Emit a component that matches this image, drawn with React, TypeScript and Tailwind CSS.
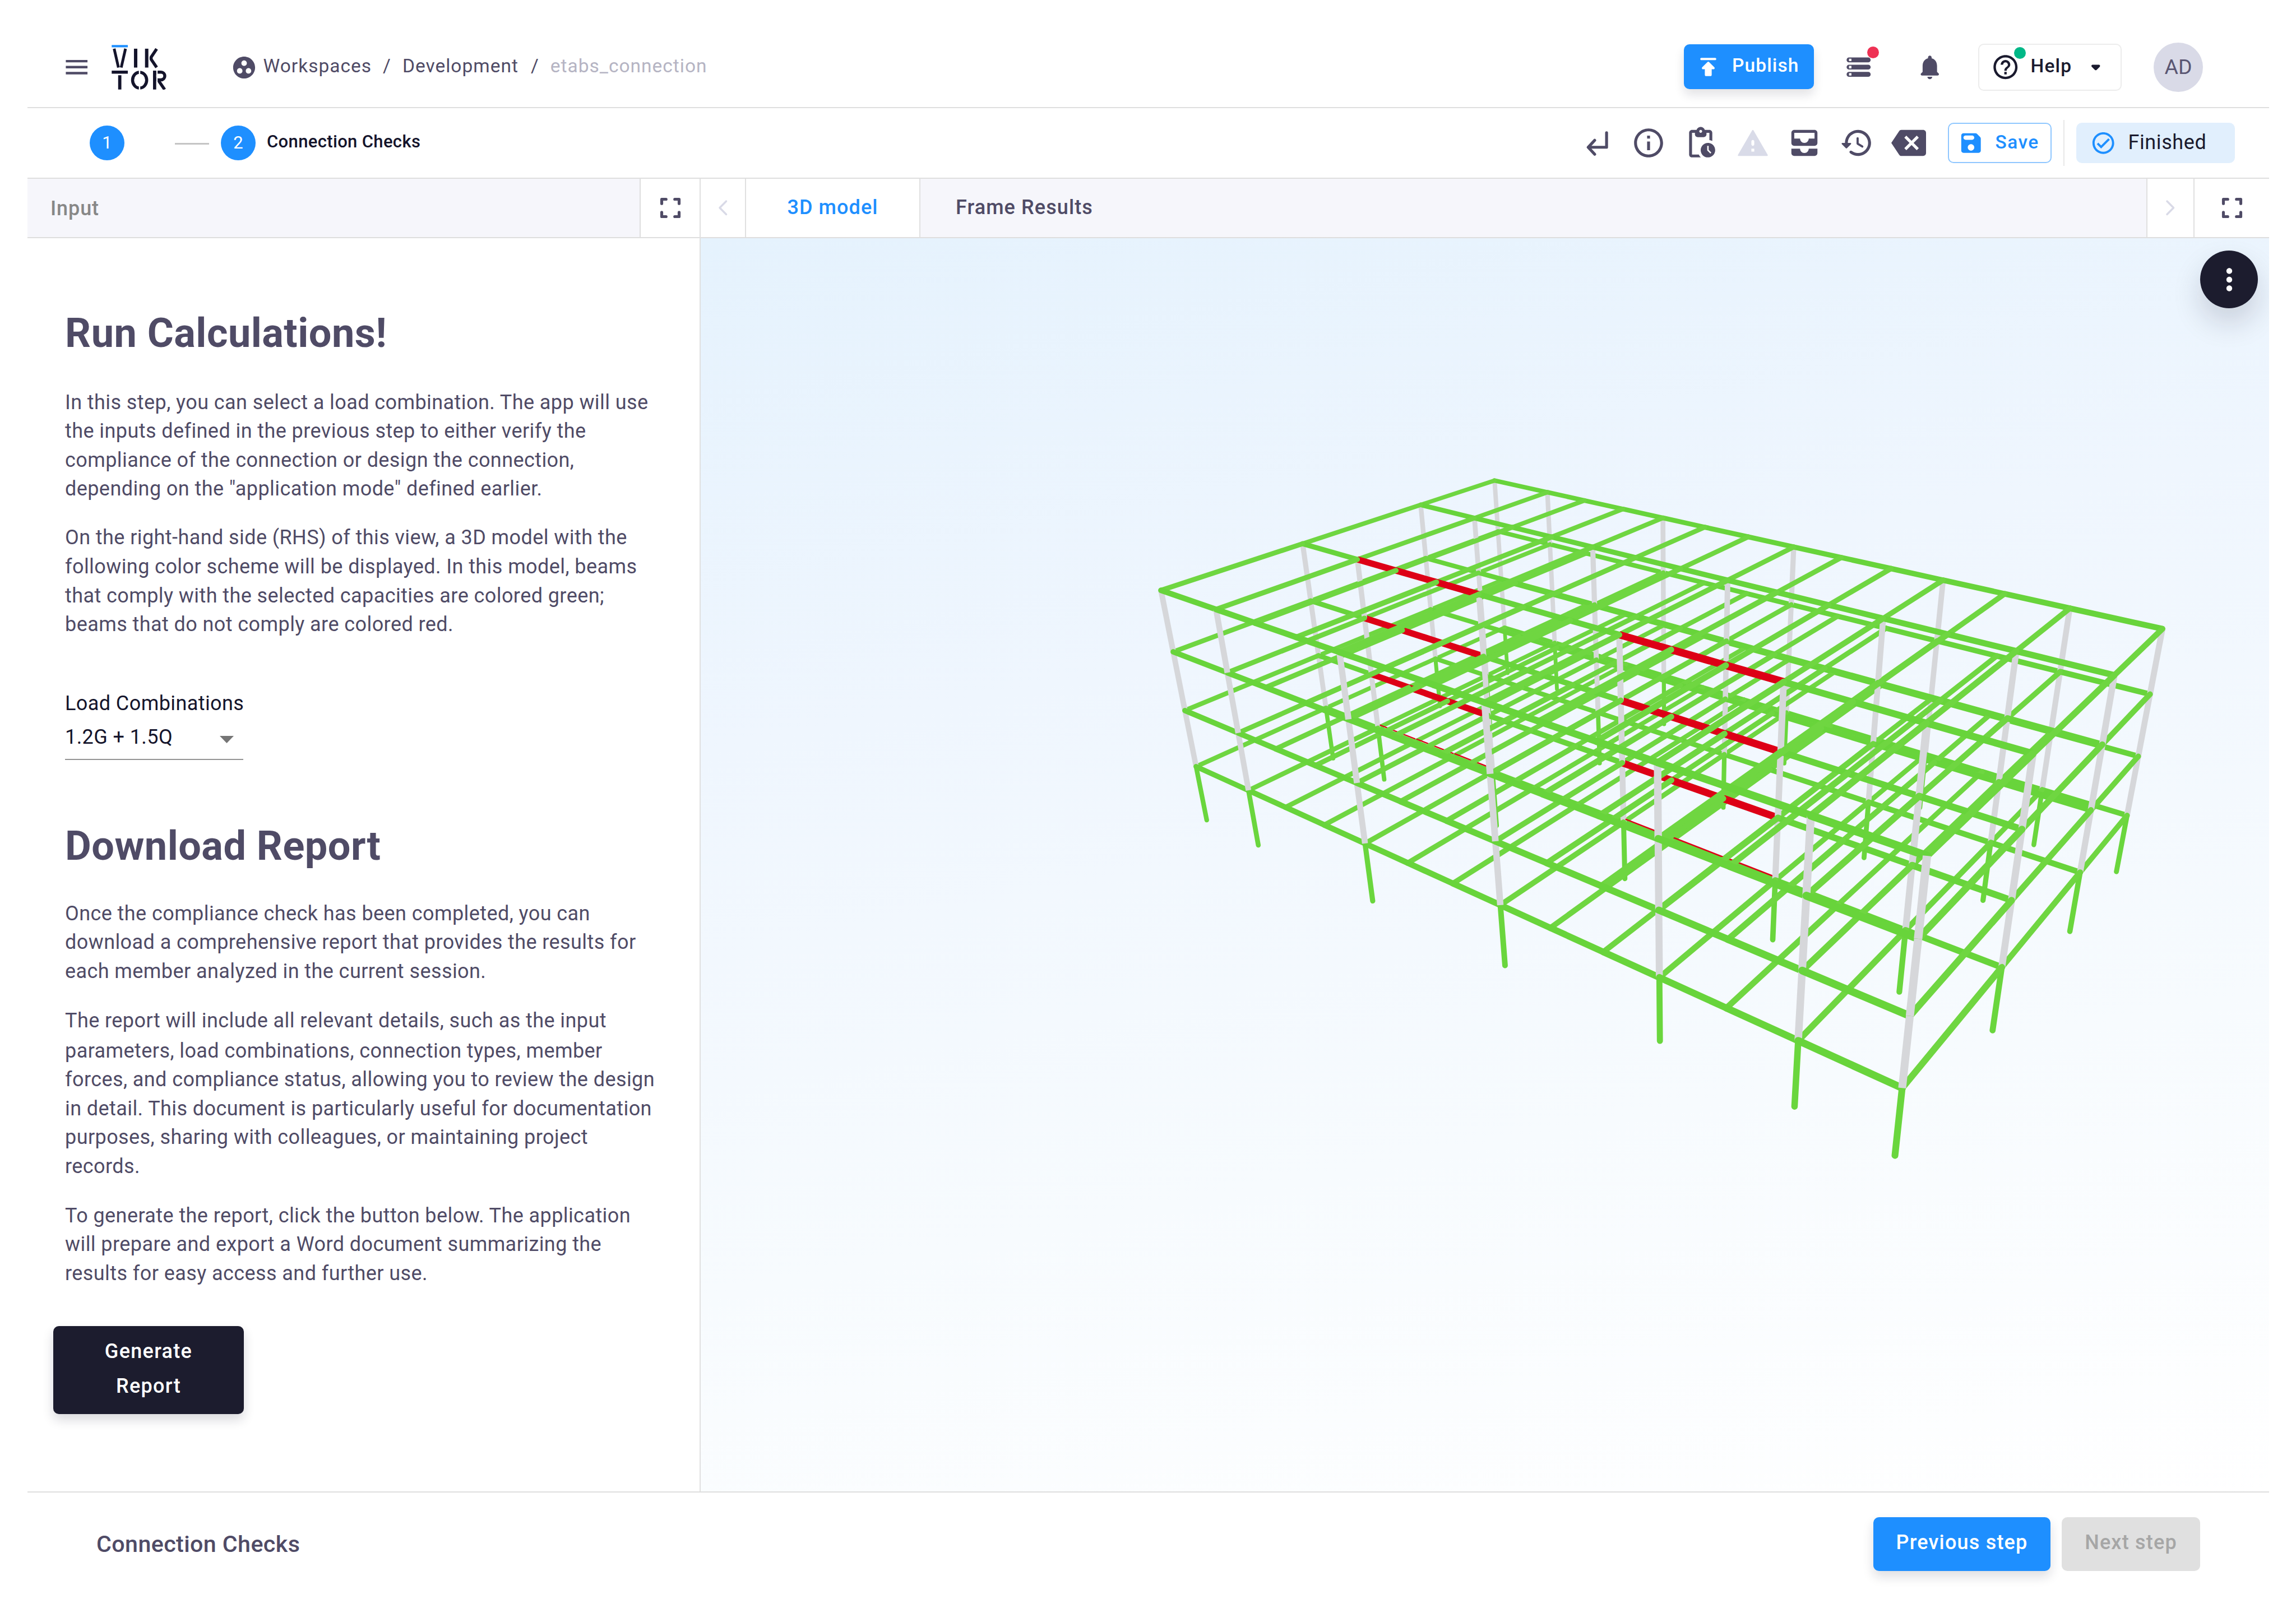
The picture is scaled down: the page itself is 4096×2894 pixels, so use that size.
import React from "react";

// Camera of the viewer: a 3x4 projection whose last entry is 1.
const CAMERA = [
  0.119762, -1.162755, -0.258307, 3.262067,
  -0.029965, -0.029707, -0.49041, 1.455934,
  -0.17574, -0.195963, -0.071145,
];

type Pt = { x: number; y: number; w: number };
const project = (gx: number, gy: number, gz: number): Pt => {
  const X = gx / 10, Y = gy, Z = gz / 4;
  const w = CAMERA[8] * X + CAMERA[9] * Y + CAMERA[10] * Z + 1;
  return {
    x: ((CAMERA[0] * X + CAMERA[1] * Y + CAMERA[2] * Z + CAMERA[3]) / w) * 1000,
    y: ((CAMERA[4] * X + CAMERA[5] * Y + CAMERA[6] * Z + CAMERA[7]) / w) * 1000,
    w,
  };
};

const COLS_X = [0, 1.5, 4.5, 7.5, 10.5, 12.75, 14.25];
const BEAMS_X = [0, 1.5, 2.5, 3.5, 4.5, 5.5, 6.5, 7.5, 8.5, 9.5, 10.5, 11.625, 12.75, 14.25];
const COLS_Y = [0, 0.265, 0.632, 1];

type Member = { a: Pt; b: Pt; depth: number; color: string; size: number; cap: "butt" | "round" };

function buildFrame(): Member[] {
  const out: Member[] = [];
  const add = (a: Pt, b: Pt, color: string, size: number, cap: "butt" | "round", bias = 0) =>
    out.push({ a, b, depth: (a.w + b.w) / 2 + bias, color, size, cap });

  for (let z = 1; z <= 4; z++) {
    COLS_Y.forEach((y, yi) => {
      for (let i = 0; i < BEAMS_X.length - 1; i++) {
        const x0 = BEAMS_X[i], x1 = BEAMS_X[i + 1];
        const failing = yi === 2 && ((x0 >= 1.5 && x1 <= 4.5) || (x0 >= 7.5 && x1 <= 10.5));
        const a = project(x0, y, z), b = project(x1, y, z);
        if (failing && z > 1) add(a, b, "#dd0016", 10.6, "butt");
        else add(a, b, "#68d43b", 8.8, "round");
        if (failing && z === 1) {
          add({ ...a, x: a.x + 4, y: a.y - 6.5 }, { ...b, x: b.x + 2, y: b.y - 6.5 }, "#dd0016", 2.2, "butt", -0.001);
        }
      }
    });
    BEAMS_X.forEach((x) => {
      for (let j = 0; j < COLS_Y.length - 1; j++) {
        add(project(x, COLS_Y[j], z), project(x, COLS_Y[j + 1], z), "#6fd641", 8.2, "round");
      }
    });
  }
  COLS_X.forEach((x) =>
    COLS_Y.forEach((y) => {
      for (let z = 0; z < 4; z++) {
        add(project(x, y, z), project(x, y, z + 1), z === 0 ? "#6ad63d" : "#d6d7da", z === 0 ? 8 : 9, z === 0 ? "round" : "butt");
      }
    }),
  );
  return out.sort((m, n) => n.depth - m.depth);
}

const FRAME = buildFrame();

function Model() {
  return (
    <svg className="block size-full" viewBox="1515.8 515.4 3394.2 2710.3" preserveAspectRatio="none">
      {FRAME.map((m, i) => (
        <line key={i} x1={m.a.x} y1={m.a.y} x2={m.b.x} y2={m.b.y} stroke={m.color} strokeWidth={m.size / ((m.a.w + m.b.w) / 2)} strokeLinecap={m.cap} />
      ))}
    </svg>
  );
}

function Icon({ d, className }: { d: string; className: string }) {
  return (
    <svg viewBox="0 0 24 24" fill="currentColor" className={`shrink-0 ${className}`}>
      <path d={d} />
    </svg>
  );
}

function StrokeIcon({ d, className, width = 2 }: { d: string; className: string; width?: number }) {
  return (
    <svg viewBox="0 0 24 24" fill="none" stroke="currentColor" strokeWidth={width} strokeLinecap="round" strokeLinejoin="round" className={`shrink-0 ${className}`}>
      <path d={d} />
    </svg>
  );
}

const ICONS = {
  menu: "M3 18h18v-2H3v2zm0-5h18v-2H3v2zm0-7v2h18V6H3z",
  workspaces:
    "M12 2C6.48 2 2 6.48 2 12s4.48 10 10 10 10-4.48 10-10S17.52 2 12 2zM8 17.5c-1.38 0-2.5-1.12-2.5-2.5s1.12-2.5 2.5-2.5 2.5 1.12 2.5 2.5-1.12 2.5-2.5 2.5zM9.5 8c0-1.38 1.12-2.5 2.5-2.5s2.5 1.12 2.5 2.5-1.12 2.5-2.5 2.5S9.5 9.38 9.5 8zm6.500 9.500c-1.380 0-2.500-1.120-2.500-2.500s1.120-2.500 2.500-2.500 2.500 1.120 2.500 2.500-1.120 2.500-2.500 2.500z",
  publish:
    "M5 5c0 .55.45 1 1 1h12c.55 0 1-.45 1-1s-.45-1-1-1H6c-.55 0-1 .45-1 1zm2.410 9H9v5c0 .55.45 1 1 1h4c.55 0 1-.45 1-1v-5h1.590c.89 0 1.340-1.080.71-1.710L12.710 7.700a1 1 0 0 0-1.410 0l-4.590 4.590c-.63.63-.19 1.710.7 1.710z",
  storage:
    "M4 20h16c1.100 0 2-.9 2-2s-.9-2-2-2H4c-1.100 0-2 .9-2 2s.9 2 2 2zm0-3h2v2H4v-2zM2 6c0 1.100.9 2 2 2h16c1.100 0 2-.9 2-2s-.9-2-2-2H4c-1.100 0-2 .9-2 2zm4 1H4V5h2v2zm-2 7h16c1.100 0 2-.9 2-2s-.9-2-2-2H4c-1.100 0-2 .9-2 2s.9 2 2 2zm0-3h2v2H4v-2z",
  bell: "M12 22c1.100 0 2-.9 2-2h-4c0 1.100.89 2 2 2zm6-6v-5c0-3.070-1.640-5.640-4.500-6.320V4c0-.83-.67-1.500-1.500-1.500s-1.500.67-1.500 1.500v.68C7.630 5.360 6 7.920 6 11v5l-1.290 1.290c-.63.63-.19 1.710.7 1.710h13.170c.89 0 1.340-1.080.71-1.710L18 16z",
  help: "M11 18h2v-2h-2v2zm1-16C6.480 2 2 6.480 2 12s4.480 10 10 10 10-4.480 10-10S17.520 2 12 2zm0 18c-4.410 0-8-3.590-8-8s3.590-8 8-8 8 3.590 8 8-3.590 8-8 8zm0-14c-2.210 0-4 1.790-4 4h2c0-1.100.9-2 2-2s2 .9 2 2c0 2-3 1.750-3 5h2c0-2.250 3-2.500 3-5 0-2.210-1.790-4-4-4z",
  dropdown: "M8.710 11.710l2.590 2.590c.39.39 1.020.39 1.410 0l2.590-2.590c.63-.63.18-1.710-.71-1.710H9.410c-.89 0-1.330 1.080-.7 1.710z",
  info: "M11 7h2v2h-2zm0 4h2v6h-2zm1-9C6.480 2 2 6.480 2 12s4.480 10 10 10 10-4.480 10-10S17.520 2 12 2zm0 18c-4.410 0-8-3.590-8-8s3.590-8 8-8 8 3.590 8 8-3.590 8-8 8z",
  pending:
    "M17 12c-2.760 0-5 2.240-5 5s2.240 5 5 5 5-2.240 5-5-2.240-5-5-5zm1.650 7.350L16.500 17.200V14h1v2.790l1.850 1.850-.7.710zM18 3h-3.180C14.400 1.840 13.300 1 12 1s-2.400.84-2.820 2H6c-1.100 0-2 .9-2 2v15c0 1.100.9 2 2 2h6.110a6.743 6.743 0 0 1-1.420-2H6V5h2v1c0 1.100.9 2 2 2h4c1.100 0 2-.9 2-2V5h2v5.080c.71.1 1.380.31 2 .6V5c0-1.100-.9-2-2-2zm-6 2c-.55 0-1-.45-1-1s.45-1 1-1 1 .45 1 1-.45 1-1 1z",
  warning:
    "M11.570 3.300 1.750 20.200c-.2.4 0 .8.5.8h19.500c.5 0 .7-.4.5-.8L12.430 3.300c-.2-.35-.66-.35-.86 0zM12 14c-.55 0-1-.45-1-1v-2c0-.55.45-1 1-1s1 .45 1 1v2c0 .55-.45 1-1 1zm1 4h-2v-2h2v2z",
  inbox:
    "M19 3H5c-1.100 0-2 .9-2 2v7c0 1.100.9 2 2 2h14c1.100 0 2-.9 2-2V5c0-1.100-.9-2-2-2zm0 6h-4c0 1.620-1.380 3-3 3s-3-1.380-3-3H5V5h14v4zm-4 7h6v3c0 1.100-.9 2-2 2H5c-1.100 0-2-.9-2-2v-3h6c0 1.660 1.340 3 3 3s3-1.340 3-3z",
  history:
    "M13.260 3C8.170 2.860 4 6.950 4 12H2.210c-.45 0-.67.54-.35.85l2.790 2.800c.2.2.51.2.71 0l2.790-2.800c.31-.31.09-.85-.36-.85H6c0-3.900 3.180-7.050 7.100-7 3.720.05 6.850 3.180 6.900 6.900.05 3.910-3.100 7.100-7 7.100-1.610 0-3.100-.55-4.280-1.480-.4-.31-.96-.28-1.320.08-.42.42-.39 1.130.08 1.490C9 20.290 10.910 21 13 21c5.050 0 9.140-4.170 9-9.260-.13-4.690-4.050-8.610-8.740-8.740zm-.51 5c-.41 0-.75.34-.75.75v3.680c0 .35.19.68.49.86l3.120 1.850c.36.21.82.09 1.030-.26.21-.36.09-.82-.26-1.030l-2.880-1.710v-3.400c0-.4-.34-.74-.75-.74z",
  backspace:
    "M22 3H7c-.69 0-1.230.35-1.590.88L0 12l5.410 8.110c.36.53.9.89 1.590.89h15c1.100 0 2-.9 2-2V5c0-1.100-.9-2-2-2zm-3 12.590L17.590 17 14 13.410 10.410 17 9 15.590 12.590 12 9 8.410 10.410 7 14 10.590 17.590 7 19 8.410 15.410 12 19 15.590z",
  save: "M17.590 3.590c-.38-.38-.89-.59-1.420-.59H5c-1.110 0-2 .9-2 2v14c0 1.100.9 2 2 2h14c1.100 0 2-.9 2-2V7.830c0-.53-.21-1.040-.59-1.410l-2.820-2.830zM12 19c-1.660 0-3-1.340-3-3s1.340-3 3-3 3 1.340 3 3-1.340 3-3 3zm1-10H7c-1.100 0-2-.9-2-2s.9-2 2-2h6c1.100 0 2 .9 2 2s-.9 2-2 2z",
  check:
    "M16.590 7.580 10 14.170l-2.590-2.580L6 13l4 4 8-8zM12 2C6.480 2 2 6.480 2 12s4.480 10 10 10 10-4.480 10-10S17.520 2 12 2zm0 18c-4.420 0-8-3.580-8-8s3.580-8 8-8 8 3.580 8 8-3.580 8-8 8z",
  more: "M12 8c1.100 0 2-.9 2-2s-.9-2-2-2-2 .9-2 2 .9 2 2 2zm0 2c-1.100 0-2 .9-2 2s.9 2 2 2 2-.9 2-2-.9-2-2-2zm0 6c-1.100 0-2 .9-2 2s.9 2 2 2 2-.9 2-2-.9-2-2-2z",
};
const FULLSCREEN = "M6 9V6h3M15 6h3v3M18 15v3h-3M9 18H6v-3";
const RETURN = "M19 5v10H6.500M10.800 10.200 6.300 15l4.500 4.800";

function Logo() {
  return (
    <svg viewBox="362 50 358 292" className="ml-[36px] h-[80px] w-[98px] shrink-0" fill="#14142b" stroke="none">
      <rect x="363" y="51" width="105" height="15" fill="#1e8fff" />
      <line x1="379" y1="75" x2="407" y2="198" stroke="#14142b" strokeWidth="18" />
      <line x1="453" y1="75" x2="425" y2="198" stroke="#14142b" strokeWidth="18" />
      <rect x="508" y="75" width="22" height="123" />
      <rect x="580" y="75" width="22" height="123" />
      <polyline points="656,76 620,130 620,144 656,197" fill="none" stroke="#14142b" strokeWidth="20" strokeLinejoin="bevel" />
      <rect x="363" y="218" width="105" height="20" />
      <rect x="405" y="248" width="21" height="93" />
      <ellipse cx="545" cy="280" rx="46" ry="51.500" fill="none" stroke="#14142b" strokeWidth="20" />
      <rect x="540" y="216" width="9" height="128" fill="#fff" />
      <rect x="640" y="228" width="69" height="50" rx="25" fill="none" stroke="#14142b" strokeWidth="20" />
      <line x1="666" y1="280" x2="708" y2="341" stroke="#14142b" strokeWidth="20" />
      <rect x="653" y="216" width="9" height="126" fill="#fff" />
      <rect x="632" y="218" width="21" height="123" />
      <rect x="620" y="216" width="12" height="126" fill="#fff" />
    </svg>
  );
}

function Header() {
  return (
    <header className="flex h-[193px] items-center border-b-2 border-[#dedede] pt-[49px] pr-[118px] pl-[62px]">
      <Icon d={ICONS.menu} className="size-[51.500px] text-[#4f4b66]" />
      <Logo />
      <nav className="ml-[115px] flex items-center text-[33.500px] leading-[40px] tracking-[1px] text-[#4f4b66]">
        <Icon d={ICONS.workspaces} className="size-[47px]" />
        <span className="mb-[5px] ml-[11px]">Workspaces</span>
        <span className="mb-[5px] ml-[20px]">/</span>
        <span className="mb-[5px] ml-[20px]">Development</span>
        <span className="mb-[5px] ml-[22px]">/</span>
        <span className="mb-[5px] ml-[20px] text-[#b5b4c3]">etabs_connection</span>
      </nav>
      <button className="mb-[2px] ml-auto flex h-[80px] w-[232px] items-center rounded-[10px] bg-[#1e8fff] pl-[19px] text-white shadow-[0_10px_18px_rgba(20,20,43,0.12)]">
        <Icon d={ICONS.publish} className="size-[49px]" />
        <span className="mb-[4px] ml-[18px] text-[33.500px] leading-[40px] font-medium tracking-[1.100px]">Publish</span>
      </button>
      <div className="relative ml-[54px] text-[#4f4b66]">
        <Icon d={ICONS.storage} className="size-[51.500px]" />
        <span className="absolute top-[-11px] right-[-10px] size-[21px] rounded-full bg-[#ee3154]" />
      </div>
      <Icon d={ICONS.bell} className="ml-[75px] size-[51.500px] text-[#4f4b66]" />
      <div className="mb-[1px] ml-[61px] flex h-[84px] w-[256px] items-center rounded-[10px] border-2 border-[#ececec] pl-[21px] text-[#1a1a2e]">
        <div className="relative">
          <Icon d={ICONS.help} className="size-[51.500px]" />
          <span className="absolute top-[-10px] right-[-10px] size-[21px] rounded-full bg-[#00b887]" />
        </div>
        <span className="mb-[4px] ml-[19px] text-[33.500px] leading-[40px] font-medium tracking-[1.200px]">Help</span>
        <Icon d={ICONS.dropdown} className="ml-[17px] size-[51.500px]" />
      </div>
      <div className="ml-[57px] flex size-[88px] items-center justify-center rounded-full bg-[#d9dae7] text-[37.500px] leading-[40px] text-[#5a5672]">
        <span className="mb-[3px]">AD</span>
      </div>
    </header>
  );
}

function Toolbar() {
  const actions: [string, string][] = [
    [ICONS.info, "size-[62px] text-[#4f4b66]"],
    [ICONS.pending, "size-[62px] text-[#4f4b66]"],
    [ICONS.warning, "size-[62px] text-[#d9dbe8]"],
    [ICONS.inbox, "size-[62px] text-[#4f4b66]"],
    [ICONS.history, "size-[62px] text-[#4f4b66]"],
    [ICONS.backspace, "size-[62px] text-[#4f4b66]"],
  ];
  return (
    <div className="flex h-[126px] items-center border-b-2 border-[#dedede] pr-[61px] pl-[111px]">
      <span className="flex size-[62px] items-center justify-center rounded-full bg-[#1e8fff] text-[31px] leading-[40px] text-white">1</span>
      <span className="mt-[2px] ml-[90px] h-[3px] w-[61px] bg-[#c4c4c4]" />
      <span className="ml-[21px] flex size-[62px] items-center justify-center rounded-full bg-[#1e8fff] text-[31px] leading-[40px] text-white">2</span>
      <span className="mb-[5px] ml-[20px] text-[31px] leading-[40px] font-medium tracking-[0.350px] text-[#14142b]">Connection Checks</span>
      <div className="ml-auto flex gap-[30.800px]">
        <StrokeIcon d={RETURN} className="size-[62px] text-[#4f4b66]" />
        {actions.map(([d, cls], i) => (
          <Icon key={i} d={d} className={cls} />
        ))}
      </div>
      <button className="ml-[39px] flex h-[72px] w-[185px] items-center rounded-[10px] border-2 border-[#8fc7ff] pl-[16px] text-[#1e8fff]">
        <Icon d={ICONS.save} className="size-[46.500px]" />
        <span className="mb-[2px] ml-[20px] text-[33.500px] leading-[40px] font-medium tracking-[1.400px]">Save</span>
      </button>
      <span className="ml-[21px] h-[82px] w-[2px] bg-[#e8e8e8]" />
      <div className="ml-[21px] flex h-[72px] w-[283px] items-center rounded-[10px] bg-[#e1effd] pl-[25px]">
        <Icon d={ICONS.check} className="size-[46.500px] text-[#1e8fff]" />
        <span className="mb-[3px] ml-[21px] text-[36px] leading-[40px] tracking-[0.600px] text-[#1a1a2e]">Finished</span>
      </div>
    </div>
  );
}

function InputPanel() {
  return (
    <section className="flex w-[1201px] shrink-0 flex-col border-r-2 border-[#e0e0e0]">
      <div className="flex h-[106px] border-b-2 border-[#dedede] bg-[#f6f6fb]">
        <div className="flex flex-1 items-center pt-[1px] pl-[41px] text-[36px] leading-[42px] font-medium tracking-[0.900px] text-[#878787]">Input</div>
        <div className="flex w-[107px] items-center justify-center border-l-2 border-[#dedede] bg-white text-[#4f4b66]">
          <StrokeIcon d={FULLSCREEN} className="size-[62px]" />
        </div>
      </div>
      <div className="flex flex-col items-start pt-[128px] pl-[67px] text-[36px] leading-[51.600px] tracking-[0.420px] whitespace-nowrap text-[#4f4b66]">
        <h1 className="text-[72px] leading-[84px] font-bold tracking-[0.500px]">Run Calculations!</h1>
        <p className="mt-[55.500px]">
          In this step, you can select a load combination. The app will use<br />
          the inputs defined in the previous step to either verify the<br />
          compliance of the connection or design the connection,<br />
          depending on the "application mode" defined earlier.
        </p>
        <p className="mt-[35.500px]">
          On the right-hand side (RHS) of this view, a 3D model with the<br />
          following color scheme will be displayed. In this model, beams<br />
          that comply with the selected capacities are colored green;<br />
          beams that do not comply are colored red.
        </p>
        <label className="mt-[88px] leading-[52px] tracking-[0.420px] text-[#14142b]">Load Combinations</label>
        <div className="mt-[10px] flex h-[65px] w-[318px] items-center justify-between border-b-2 border-[#949494] pr-[17px] text-[#14142b]">
          <span className="mb-[12px] tracking-[0.420px]">1.2G + 1.5Q</span>
          <svg viewBox="0 0 25 13" className="mb-[6px] h-[13px] w-[25px] fill-[#757575]">
            <polygon points="0,0 25,0 12.500,13" />
          </svg>
        </div>
        <h1 className="mt-[112px] text-[72px] leading-[84px] font-bold tracking-[0.500px]">Download Report</h1>
        <p className="mt-[53px]">
          Once the compliance check has been completed, you can<br />
          download a comprehensive report that provides the results for<br />
          each member analyzed in the current session.
        </p>
        <p className="mt-[36.500px]">
          <span className="mb-[2px] block">The report will include all relevant details, such as the input</span>
          parameters, load combinations, connection types, member<br />
          forces, and compliance status, allowing you to review the design<br />
          in detail. This document is particularly useful for documentation<br />
          purposes, sharing with colleagues, or maintaining project<br />
          records.
        </p>
        <p className="mt-[36px]">
          To generate the report, click the button below. The application<br />
          will prepare and export a Word document summarizing the<br />
          results for easy access and further use.
        </p>
        <button className="mt-[68px] -ml-[21px] h-[157px] w-[340px] rounded-[10px] bg-[#1c1c2e] pb-[6px] text-[36px] leading-[62px] font-medium tracking-[1.300px] text-white shadow-[0_10px_20px_rgba(20,20,43,0.16)]">
          Generate<br />
          Report
        </button>
      </div>
    </section>
  );
}

function ViewPanel() {
  return (
    <section className="flex flex-1 flex-col">
      <div className="flex h-[106px] border-b-2 border-[#dedede] bg-[#f6f6fb] text-[36px] leading-[42px] font-medium tracking-[1.100px] text-[#4f4b66]">
        <div className="flex w-[81px] items-center justify-center border-r-2 border-[#e0e0e0] bg-white text-[#d9dae7]">
          <StrokeIcon d="M14.700 6.500 9.300 12l5.400 5.500" width={1.6} className="size-[51.500px]" />
        </div>
        <div className="flex w-[311px] items-center justify-center border-r-2 border-[#e0e0e0] bg-white pb-[2px] text-[#1e8fff]">3D model</div>
        <div className="flex items-center pb-[2px] pl-[63px]">Frame Results</div>
        <div className="ml-auto flex w-[84px] items-center justify-center border-l-2 border-[#e0e0e0] bg-white text-[#d9dae7]">
          <StrokeIcon d="M9.300 6.500 14.700 12l-5.400 5.500" width={1.6} className="size-[51.500px]" />
        </div>
        <div className="flex w-[135px] items-center justify-center border-l-2 border-[#e0e0e0] bg-white">
          <StrokeIcon d={FULLSCREEN} className="size-[62px]" />
        </div>
      </div>
      <div className="relative flex-1 overflow-hidden bg-[linear-gradient(169deg,#e5f2fd_0%,#eff6fe_33%,#f7fbfe_68%,#ffffff_100%)]">
        <Model />
        <button className="absolute top-[22px] right-[20px] flex size-[103px] items-center justify-center rounded-full bg-[#1c1c2e] text-white shadow-[0_26px_52px_rgba(20,20,43,0.16)]">
          <Icon d={ICONS.more} className="size-[62px]" />
        </button>
      </div>
    </section>
  );
}

function Footer() {
  return (
    <footer className="flex h-[233px] items-start border-t-2 border-[#dedede] pt-[44px] pr-[123px] pl-[123px]">
      <span className="flex h-[96px] items-center text-[41.200px] leading-[50px] font-medium tracking-[0.400px] text-[#4f4b66]">Connection Checks</span>
      <button className="ml-auto flex h-[96px] w-[316px] items-center justify-center rounded-[10px] bg-[#1e8fff] pb-[6px] text-[36px] leading-[42px] font-medium tracking-[1.200px] text-white shadow-[0_10px_20px_rgba(20,20,43,0.14)]">Previous step</button>
      <button className="ml-[20px] flex h-[96px] w-[247px] items-center justify-center rounded-[10px] bg-[#e0e0e0] pb-[6px] text-[36px] leading-[42px] font-medium tracking-[1.200px] text-[#a6a6a6]">Next step</button>
    </footer>
  );
}

export default function App() {
  return (
    <div className="h-[2894px] w-[4096px] bg-white pr-[48px] pl-[49px] font-['Roboto',sans-serif]">
      <div className="flex h-full flex-col">
        <Header />
        <Toolbar />
        <main className="flex min-h-0 flex-1">
          <InputPanel />
          <ViewPanel />
        </main>
        <Footer />
      </div>
    </div>
  );
}
